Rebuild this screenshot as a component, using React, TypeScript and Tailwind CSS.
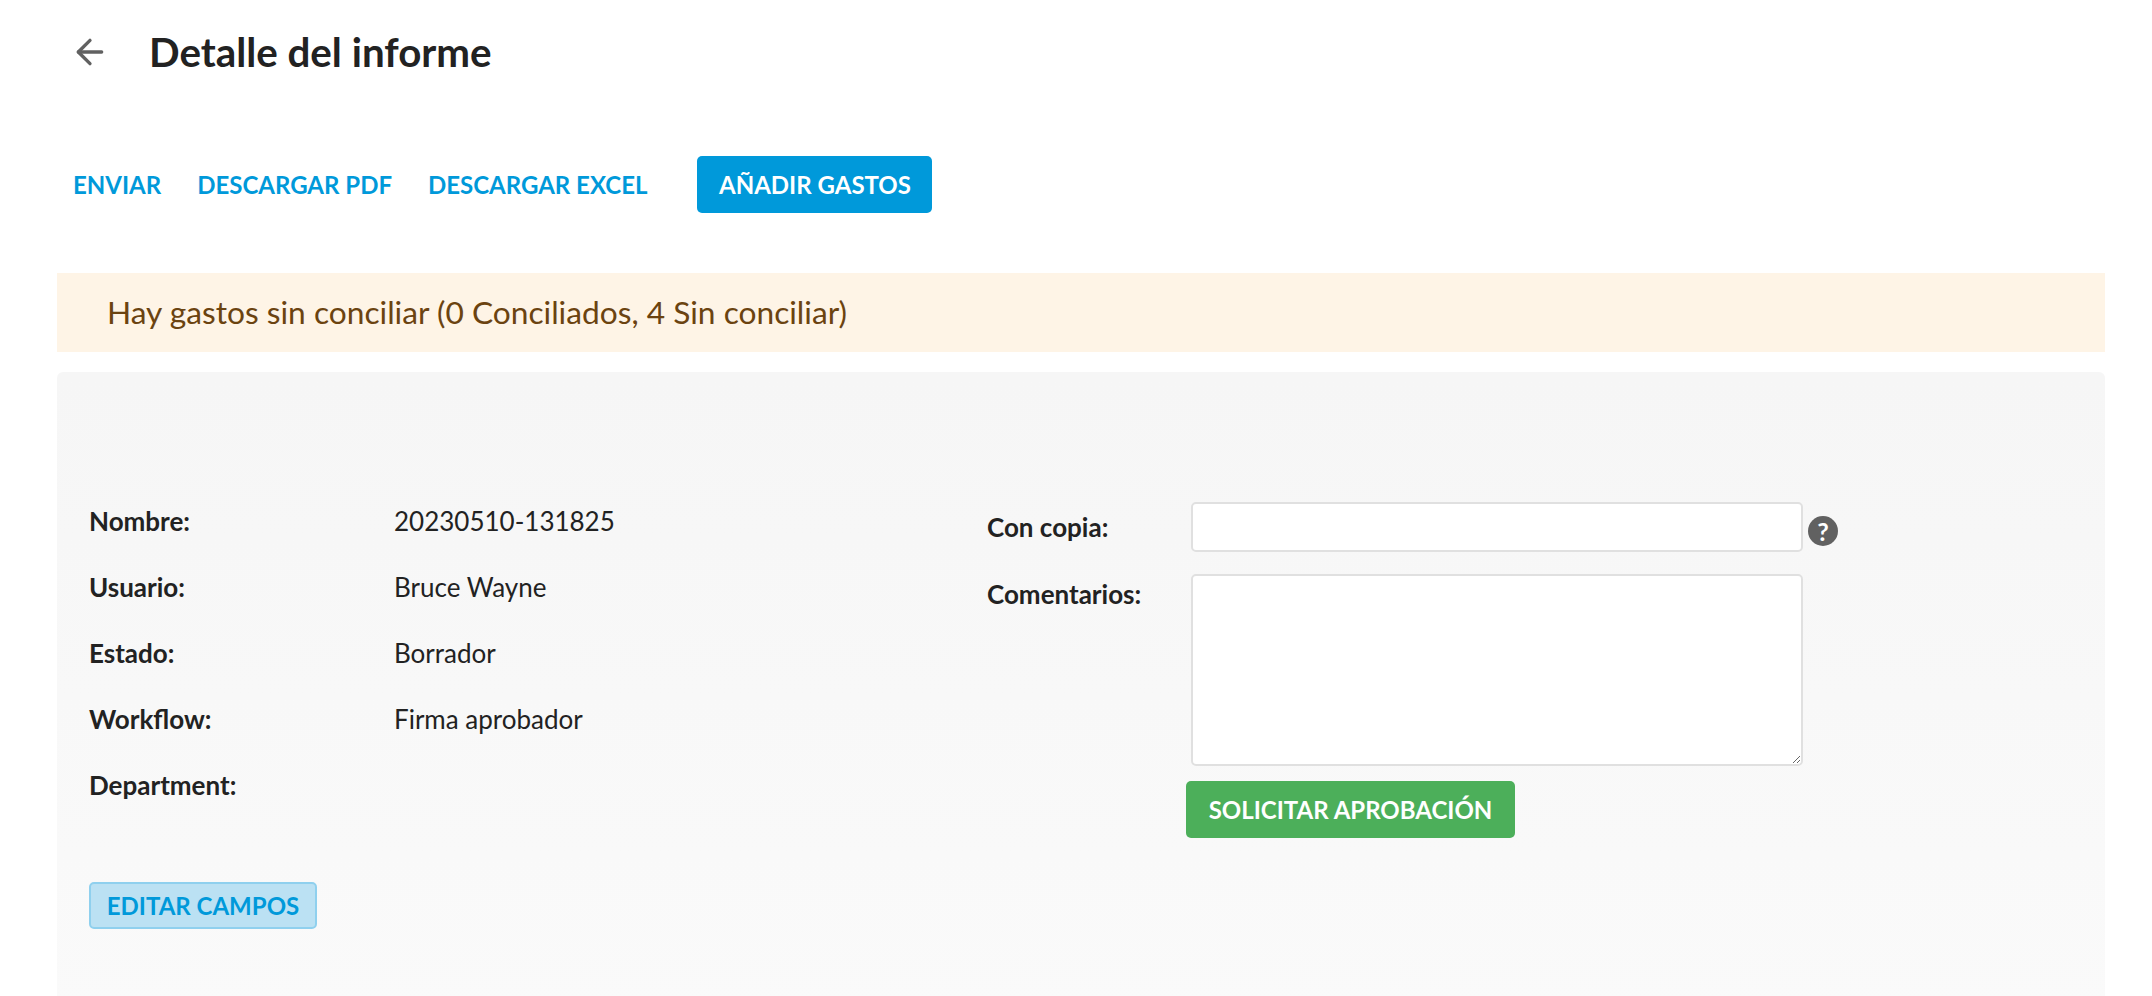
import React from 'react'
import { ArrowLeft } from 'lucide-react'

const fields = [
  { label: 'Nombre:', value: '20230510-131825' },
  { label: 'Usuario:', value: 'Bruce Wayne' },
  { label: 'Estado:', value: 'Borrador' },
  { label: 'Workflow:', value: 'Firma aprobador' },
  { label: 'Department:', value: '' },
]

export default function App() {
  return (
    <div className="w-[2152px] h-[996px] overflow-hidden bg-white font-['Lato',sans-serif] text-[#222222]">
      {/* Header */}
      <div className="flex items-center h-[104px] pl-[70px]">
        <ArrowLeft className="w-[40px] h-[40px] text-[#616161]" strokeWidth={2} />
        <h1 className="ml-[39px] text-[40.3px] font-bold">Detalle del informe</h1>
      </div>

      {/* Actions */}
      <div className="flex items-center h-[57px] mt-[52px] pl-[73px] text-[24px] font-bold text-[#0099da]">
        <span>ENVIAR</span>
        <span className="ml-[36px]">DESCARGAR PDF</span>
        <span className="ml-[36px]">DESCARGAR EXCEL</span>
        <button className="ml-[50px] w-[235px] h-[57px] rounded-[5px] bg-[#0099da] text-white font-bold">AÑADIR GASTOS</button>
      </div>

      {/* Banner */}
      <div className="flex items-center h-[79px] ml-[57px] mr-[47px] mt-[60px] pl-[50px] bg-[#fef4e6] text-[31.7px] text-[#6b4310]">
        Hay gastos sin conciliar (0 Conciliados, 4 Sin conciliar)
      </div>

      {/* Panel */}
      <div className="flex h-[640px] ml-[57px] mr-[47px] mt-[20px] pl-[32px] pt-[116px] rounded-t-[6px] bg-gradient-to-b from-[#f6f6f6] to-[#fafafa] text-[26px]">
        <div className="w-[898px]">
          {fields.map((f) => (
            <div key={f.label} className="flex items-center h-[66px]">
              <span className="w-[305px] font-bold">{f.label}</span>
              <span>{f.value}</span>
            </div>
          ))}
          <button className="mt-[64px] w-[228px] h-[47px] rounded-[5px] border-2 border-[#8fd0ee] bg-[#bbe1f3] text-[24px] font-bold text-[#0099da]">
            EDITAR CAMPOS
          </button>
        </div>

        <div className="pt-[14px]">
          <div className="flex">
            <span className="w-[204px] h-[50px] flex items-center font-bold">Con copia:</span>
            <div className="w-[612px] h-[50px] rounded-[5px] border-2 border-[#e0e0e0] bg-white" />
            <span className="ml-[5px] mt-[14px] flex items-center justify-center w-[30px] h-[30px] rounded-full bg-[#616161] text-[25px] leading-none font-bold text-white">?</span>
          </div>
          <div className="flex mt-[22px]">
            <span className="w-[204px] h-[40px] flex items-center font-bold">Comentarios:</span>
            <textarea className="w-[612px] h-[192px] rounded-[5px] border-2 border-[#e0e0e0] bg-white" />
          </div>
          <button className="block ml-[199px] mt-[15px] w-[329px] h-[57px] rounded-[5px] bg-[#4caf5a] text-[24px] font-bold text-white">
            SOLICITAR APROBACIÓN
          </button>
        </div>
      </div>
    </div>
  )
}
